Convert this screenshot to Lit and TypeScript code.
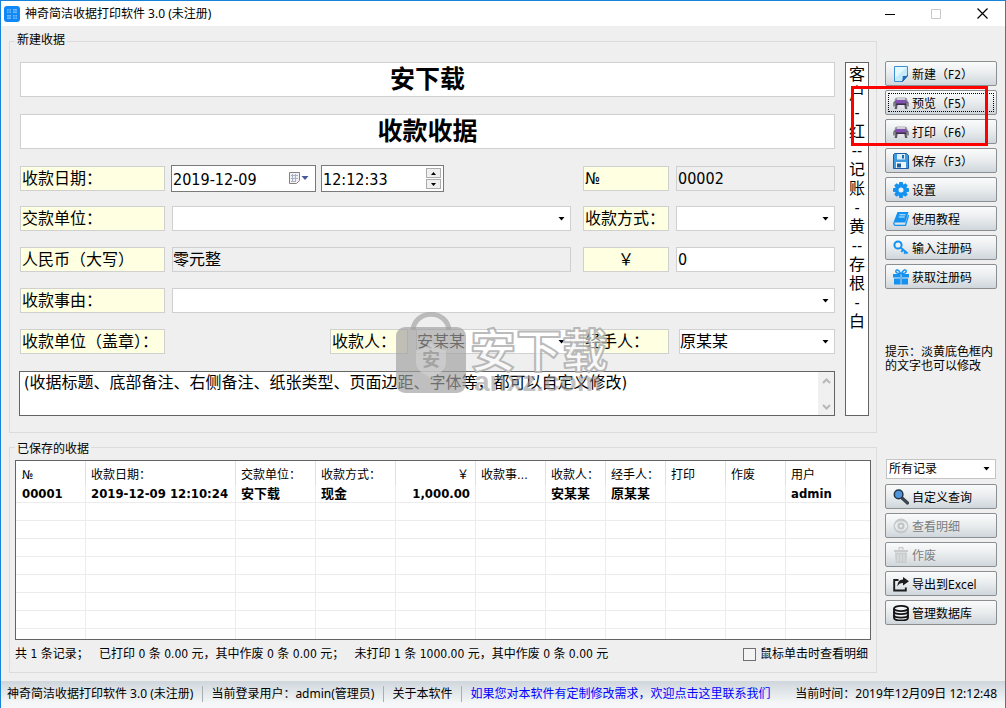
import { LitElement, html, css, svg, nothing } from "lit";
import { customElement, property, state } from "lit/decorators.js";
import { classMap } from "lit/directives/class-map.js";

const glyphs: Record<string, unknown> = {
  page: svg`
    <path d="M1.5 .5H14.5V10L9.5 15.5H1.5Z" fill="#c4ebfc" stroke="#3a8fd0"/>
    <path d="M2 1H14L2 12Z" fill="#e6f8ff"/>
    <path d="M14.5 9.5C13 11 11 10.5 10 10.5C10.5 12 10 14 9.5 15.5Z" fill="#1f78c8" stroke="#1560a8"/>`,
  printer: svg`
    <path d="M4 2H12V5H4Z" fill="#cfcfd6"/>
    <path d="M2 3.500L4 2.500V6H1.500ZM14 3.500L12 2.500V6H14.500Z" fill="#9a98a0"/>
    <path d="M.5 7L3 5.500H13L15.500 7V11H.5Z" fill="#66626c"/>
    <path d="M3 5H13L13.500 8.500H2.500Z" fill="#8250b4"/>
    <path d="M2.500 8.500H13.500V10H2.500Z" fill="#3a2f4c"/>
    <path d="M0 8H2.500V11.500H0ZM13.500 8H16V11.500H13.500Z" fill="#8c8992"/>
    <path d="M4.500 10H11.500L12 12.500H4Z" fill="#e4e4ea"/>
    <path d="M2.500 10.500H4.500L4 14H1.500ZM13.500 10.500H11.500L12 14H14.500Z" fill="#5c5864"/>`,
  disk: svg`
    <path d="M1.500 .5H13.5L15.500 2.500V15.500H.5V1.500Z" fill="#3f9ae0" stroke="#1c5fa8"/>
    <path d="M4 1H12V6.500H4Z" fill="#d8eefb"/>
    <path d="M9 2H11V5.500H9Z" fill="#2468a8"/>
    <path d="M3 9H13V15H3Z" fill="#eef6fc"/>
    <path d="M4 10.500H8V14.500H4Z" fill="#1d5c9c"/>`,
  gear: svg`
    <g fill="#1592f0">
      <circle cx="8" cy="8" r="6"/>
      <path d="M6.300 0H9.700L10.300 3H5.700ZM6.300 16H9.700L10.300 13H5.700ZM0 6.300V9.700L3 10.300V5.700ZM16 6.300V9.700L13 10.300V5.700Z"/>
      <path d="M1.200 3.600L3.600 1.200L6 3L3 6ZM14.800 3.600L12.400 1.200L10 3L13 6ZM1.200 12.400L3.600 14.800L6 13L3 10ZM14.800 12.400L12.400 14.800L10 13L13 10Z"/>
    </g>
    <circle cx="8" cy="8" r="2.500" fill="#eef2f4"/>`,
  book: svg`
    <path d="M4.500 1H15.500L12.300 11.500H2Q.7 11.500 1 10Z" fill="#1592f0"/>
    <path d="M6.500 3.800H12.500M5.800 6H11.800" stroke="#d8efff" stroke-width="1.100"/>
    <path d="M1 11Q.5 14.300 2.500 14.300H12.500L15.600 4" fill="none" stroke="#1592f0" stroke-width="1.300"/>`,
  key: svg`
    <circle cx="5" cy="5" r="3.600" fill="none" stroke="#1592f0" stroke-width="2"/>
    <path d="M7.500 7.500L14.600 13.600M10 9.800L8.300 12M12.600 11.800L11.200 13.800" fill="none" stroke="#1592f0" stroke-width="2"/>`,
  gift: svg`
    <path d="M0 5H7V8.500H0ZM9 5H16V8.500H9ZM1 9.500H7V15.500H1ZM9 9.500H15V15.500H9Z" fill="#1592f0"/>
    <path d="M7.500 4.600C6 .5 3 0 2.800 2.300C2.800 4.200 5 4.600 7.500 4.600ZM8.500 4.600C10 .5 13 0 13.200 2.300C13.200 4.200 11 4.600 8.500 4.600Z" fill="none" stroke="#1592f0" stroke-width="1.500"/>
    <path d="M7.400 5H8.600V15.500H7.400Z" fill="#1592f0"/>`,
  search: svg`
    <path d="M9 9L14.500 14" stroke="#3b444c" stroke-width="3.200" stroke-linecap="round"/>
    <circle cx="5.600" cy="5.400" r="4.300" fill="#4f95dd" stroke="#253545" stroke-width="1.500"/>`,
  eye: svg`
    <circle cx="8" cy="8" r="7.500" fill="#c6c9cb"/>
    <ellipse cx="8" cy="8" rx="6.200" ry="4.800" fill="#e8ebec"/>
    <circle cx="8" cy="8" r="3.500" fill="#bfc3c5"/>
    <circle cx="8" cy="8" r="1.500" fill="#eceeef"/>`,
  trash: svg`
    <path d="M1 3H15V5H1ZM5.500 0H10.500V3H9.300V1.200H6.700V3H5.500ZM2 5.500H14L13.300 16H2.700Z" fill="#c9cccd"/>
    <path d="M5 7V14.500M8 7V14.500M11 7V14.500" stroke="#dfe2e3" stroke-width="1.100"/>`,
  share: svg`
    <path d="M5.500 4H1.200V14.500H12.800V11.500" fill="none" stroke="#1d1d1d" stroke-width="1.900"/>
    <path d="M10 1L16 5.200L10 9.400V7C7 7 5.500 8 4.500 10.500C4.500 6 6.500 3.700 10 3.500Z" fill="#1d1d1d"/>`,
  database: svg`
    <path d="M1 3.500V12.500C1 16.500 15 16.500 15 12.500V3.500" fill="#f2f4f5" stroke="#141414" stroke-width="1.800"/>
    <path d="M1 6.600C1 10 15 10 15 6.600M1 10C1 13.500 15 13.500 15 10" fill="none" stroke="#141414" stroke-width="1.900"/>
    <ellipse cx="8" cy="3.500" rx="7" ry="2.600" fill="#f2f4f5" stroke="#141414" stroke-width="1.800"/>`,
};

const shared = css`
  * { box-sizing: border-box; }
  button, input, select, textarea {
    font: inherit;
    color: inherit;
    margin: 0;
    border-radius: 0;
  }
`;

@customElement("tool-button")
class ToolButton extends LitElement {
  @property() icon = "";
  @property() label = "";
  @property({ type: Boolean }) disabled = false;
  @property({ type: Boolean }) current = false;

  static styles = [shared, css`
    :host { display: block; }
    .btn {
      display: flex;
      align-items: center;
      gap: 3px;
      width: 100%;
      height: 25px;
      padding: 0 7px;
      border: 1px solid #8b8f92;
      border-radius: 2px;
      background: linear-gradient(#fafbfb, #e9ecee 50%, #cfd6db);
      white-space: nowrap;
    }
    .btn:disabled { color: #7d7d7d; }
    .current { outline: 1px dotted #000; outline-offset: -4px; }
    .icon { width: 16px; height: 16px; flex: none; }
    .text { padding-top: 2px; }
  `];

  render() {
    return html`
      <button type="button" class=${classMap({ btn: true, current: this.current })} ?disabled=${this.disabled}>
        <svg class="icon" viewBox="0 0 16 16" aria-hidden="true">${glyphs[this.icon]}</svg>
        <span class="text">${this.label}</span>
      </button>`;
  }
}

type Column = { title: string; width?: number; align?: string };

const columns: Column[] = [
  { title: "№", width: 70 },
  { title: "收款日期：", width: 150 },
  { title: "交款单位：", width: 80 },
  { title: "收款方式：", width: 80 },
  { title: "￥", width: 80, align: "num" },
  { title: "收款事由：", width: 70 },
  { title: "收款人：", width: 60 },
  { title: "经手人：", width: 60 },
  { title: "打印", width: 60 },
  { title: "作废", width: 60 },
  { title: "用户", width: 60 },
  { title: "" },
];

@customElement("receipt-list")
class ReceiptList extends LitElement {
  @property({ attribute: false }) rows: string[][] = [];

  static styles = [shared, css`
    :host {
      display: block;
      height: 180px;
      overflow: hidden;
      border: 1px solid #646464;
      background: #fff;
    }
    table { width: 100%; border-collapse: separate; border-spacing: 0; table-layout: fixed; }
    th, td {
      padding: 0 5px;
      text-align: left;
      white-space: nowrap;
      overflow: hidden;
      line-height: 16px;
      border-right: 1px solid #ececec;
    }
    th { height: 24px; padding: 3px 6px 0 5px; font-weight: 400; text-overflow: ellipsis; border-color: #e0e0e0; }
    td { height: 18px; padding-top: 1px; font-size: 13px; font-weight: 700; border-bottom: 1px solid #ececec; }
    th:first-child, td:first-child { padding-left: 6px; }
    th:last-child, td:last-child { border-right: 0; }
    .num { text-align: right; }
  `];

  render() {
    const body = [...this.rows, ...Array(9 - this.rows.length).fill([])];
    return html`
      <table>
        <colgroup>${columns.map((c) => html`<col width=${c.width ?? nothing}>`)}</colgroup>
        <thead><tr>${columns.map((c) => html`<th class=${c.align ?? ""}>${c.title}</th>`)}</tr></thead>
        <tbody>
          ${body.map((r) => html`<tr>${columns.map((c, i) => html`<td class=${c.align ?? ""}>${r[i] ?? ""}</td>`)}</tr>`)}
        </tbody>
      </table>`;
  }
}

@customElement("app-root")
class AppRoot extends LitElement {
  @state() private receipts = [
    ["00001", "2019-12-09 12:10:24", "安下载", "现金", "1,000.00", "", "安某某", "原某某", "", "", "admin"],
  ];

  static styles = [shared, css`
    :host {
      display: flex;
      flex-direction: column;
      position: relative;
      box-sizing: border-box;
      min-height: 100vh;
      border: 1px solid #1883d7;
      background: #efefef;
      color: #000;
      font: 12px/16px "DejaVu Sans Condensed", "Noto Sans CJK SC", sans-serif;
    }

    .titlebar {
      display: flex;
      align-items: center;
      height: 25px;
      padding-left: 3px;
      background: #fff;
      font-family: "Noto Sans", "Noto Sans CJK SC", sans-serif;
    }
    .logo { width: 16px; height: 16px; margin-right: 5px; }
    .caption { flex: 1; }
    .winbtn { width: 46px; height: 25px; padding: 0; border: 0; background: none; }
    .winbtn svg { display: block; margin: auto; }

    .main { flex: 1; display: flex; gap: 8px; padding: 7px 8px 8px; }
    .left { flex: 1; min-width: 0; display: flex; flex-direction: column; gap: 6px; }

    fieldset { min-width: 0; margin: 0; border: 1px solid #dcdcdc; }
    legend { margin: 0; padding: 0 2px 3px; line-height: 14px; }
    .entry { padding: 12px 7px 16px 10px; }
    .entry legend { margin-left: -5px; }
    .saved { padding: 4px 5px 10px; }
    .saved legend { padding: 3px 2px 0; }

    .entry-body { display: flex; gap: 10px; }
    .form { flex: 1; min-width: 0; font-size: 16px; line-height: 22px; }
    .heading {
      display: block;
      width: 100%;
      height: 35px;
      margin-bottom: 17px;
      padding: 0 0 5px;
      border: 1px solid #d0d0d0;
      text-align: center;
      font-family: "Liberation Serif", "Noto Sans CJK SC", serif;
      font-size: 25px;
      font-weight: 700;
    }
    .heading.title { margin-bottom: 16px; }
    .row {
      display: grid;
      grid-template-columns: 145px 1fr 91px 159px;
      column-gap: 7px;
      align-items: center;
      margin-bottom: 16px;
    }
    .row.date { margin-bottom: 14px; }
    .second { margin-left: 5px; }
    .wide { grid-column: 2 / -1; }
    .tag, .field { display: block; height: 25px; border: 1px solid #d0d0d0; padding: 0 1px; white-space: nowrap; }
    .tag { padding-top: 1px; background: #ffffe1; }
    .tag.center { text-align: center; }
    .field { width: 100%; min-width: 0; background: #fff; }
    input.field { padding: 0 0 0 1px; }
    #words { padding: 0 0 3px; }
    .field[readonly] { background: #efefef; }
    .pick { display: grid; align-items: center; min-width: 0; }
    .pick > * { grid-area: 1 / 1; }
    .pick select { appearance: none; padding: 0 16px 0 0; outline: none; }
    .arrow { justify-self: end; margin-right: 6px; pointer-events: none; }
    .payee { display: flex; gap: 8px; margin-left: 158px; }
    .payee .tag { width: 78px; flex: none; }
    .payee .pick { flex: 1; }
    .payer { margin-left: 3px; }

    .times { display: flex; gap: 5px; margin-left: -1px; }
    .stamp { display: flex; align-items: center; height: 27px; border: 1px solid #7a7a7a; background: #fff; }
    .stamp.day { width: 145px; }
    .stamp.clock { width: 123px; }
    .stamp input { flex: 1; width: 0; height: 24px; padding: 1px 1px 0; border: 0; background: none; }
    .calendar { display: flex; padding: 0 6px 2px 5px; border: 0; background: none; }
    .spins { display: flex; flex-direction: column; gap: 1px; margin-right: 2px; }
    .spins button { display: grid; place-items: center; width: 15px; height: 10px; padding: 0; border: 1px solid #acacac; background: #f0f0f0; }

    .memo { display: flex; height: 45px; margin: 17px 0 0 -1px; border: 1px solid #646464; background: #fff; }
    .memo textarea { flex: 1; height: 43px; padding: 0 4px; border: 0; resize: none; overflow: hidden; background: none; line-height: 21px; }
    .scroll { display: flex; flex-direction: column; justify-content: space-between; align-items: center; width: 16px; padding: 6px 0 5px; background: #f0f0f0; }
    .side {
      flex: none;
      width: 24px;
      padding: 2px 0;
      border: 1px solid #646464;
      background: #fff;
      resize: none;
      overflow: hidden;
      text-align: center;
      font-size: 16px;
      line-height: 19px;
    }

    .totals { display: flex; align-items: center; justify-content: space-between; padding: 6px 3px 0 0; }
    .totals p { margin: 0; white-space: pre; }
    .check { display: flex; align-items: center; gap: 4px; }
    .check input { appearance: none; width: 13px; height: 13px; border: 1px solid #707070; background: #f4f4f4; }

    .tools { flex: none; width: 112px; display: flex; flex-direction: column; gap: 4px; padding-top: 28px; }
    .hint { margin: 52px -4px 82px 0; line-height: 14px; }
    .filter { margin: 0 1px 1px; }
    .filter select { height: 20px; padding-left: 2px; border-color: #c4c4c4; }

    .status {
      display: flex;
      align-items: center;
      height: 27px;
      padding: 0 8px 2px 6px;
      background: linear-gradient(#cfd6dc, #f4f6f7 80%);
      font-family: "Noto Sans", "Noto Sans CJK SC", sans-serif;
      white-space: nowrap;
    }
    .status span { padding-right: 9px; margin-right: 8px; border-right: 1px solid #a8aeb3; }
    .status a { color: #0000ff; text-decoration: none; }
    .status time { margin-left: auto; }

    .marker { position: absolute; z-index: 3; top: 85px; right: 17px; width: 137px; height: 60px; border: 3px solid #ff0000; pointer-events: none; }
    .watermark { position: absolute; z-index: 2; left: 394px; top: 311px; pointer-events: none; }
    .wm-cn { font: 700 46px "Noto Sans CJK SC", sans-serif; fill: #fff; fill-opacity: .6; stroke: #a8a8a8; stroke-opacity: .8; stroke-width: 2; stroke-linejoin: round; }
    .wm-en { font: 700 28px "Liberation Sans", sans-serif; fill: #999; fill-opacity: .6; }
    .wm-seal { font: 700 18px "Noto Sans CJK SC", sans-serif; fill: #a3a3a3; }
  `];

  private arrow() {
    return html`<svg class="arrow" width="7" height="4" viewBox="0 0 7 4" aria-hidden="true"><path d="M.5 0H6.500L3.500 3.500Z"/></svg>`;
  }

  private pick(id: string, value: string, name = "") {
    return html`
      <div class="pick">
        <select class="field" id=${id} aria-label=${name || nothing}><option>${value}</option></select>
        ${this.arrow()}
      </div>`;
  }

  render() {
    return html`
      <header class="titlebar">
        <svg class="logo" viewBox="0 0 16 16" aria-hidden="true">
          <rect width="16" height="16" rx="3" fill="#1088f8"/>
          <path d="M3 3H7V7H3ZM9 3H13V7H9ZM3 9H7V13H3ZM9 9H13V13H9Z" fill="#8cc8ff" opacity=".75"/>
          <path d="M3 5H7M9 5H13M3 11H7M9 11H13M5 3V7M11 9V13" stroke="#1088f8" stroke-width=".8"/>
        </svg>
        <span class="caption">神奇简洁收据打印软件 3.0 (未注册)</span>
        <button class="winbtn" aria-label="最小化"><svg width="10" height="10"><path d="M0 5.500H10" stroke="#000"/></svg></button>
        <button class="winbtn" aria-label="最大化" disabled><svg width="10" height="10"><path d="M.5 .5H9.500V9.500H.5Z" fill="none" stroke="#c8c8c8"/></svg></button>
        <button class="winbtn" aria-label="关闭"><svg width="11" height="11"><path d="M.5 .5L10.500 10.500M10.500 .5L.5 10.500" stroke="#000" stroke-width="1.200"/></svg></button>
      </header>

      <main class="main">
        <div class="left">
          <fieldset class="entry">
            <legend>新建收据</legend>
            <div class="entry-body">
              <div class="form">
                <input class="heading" aria-label="单位名称" value="安下载">
                <input class="heading title" aria-label="收据标题" value="收款收据">

                <div class="row date">
                  <label class="tag" for="day">收款日期：</label>
                  <div class="times">
                    <div class="stamp day">
                      <input id="day" value="2019-12-09">
                      <button class="calendar" aria-label="选择日期">
                        <svg width="21" height="14" viewBox="0 0 21 14">
                          <path d="M1.500 1.500H11.500V9.500L8.500 12.500H1.500Z" fill="#f2f2f4" stroke="#8a8080"/>
                          <path d="M3 4.500H10M3 7.500H10M3 10.500H8M4.500 3V11M7.500 3V11" stroke="#a8b0c8"/>
                          <path d="M13.500 5H20.500L17 9Z" fill="#46599a"/>
                        </svg>
                      </button>
                    </div>
                    <div class="stamp clock">
                      <input aria-label="收款时间" value="12:12:33">
                      <div class="spins">
                        <button aria-label="增加"><svg width="5" height="3"><path d="M0 3H5L2.500 0Z"/></svg></button>
                        <button aria-label="减少"><svg width="5" height="3"><path d="M0 0H5L2.500 3Z"/></svg></button>
                      </div>
                    </div>
                  </div>
                  <label class="tag second" for="number">№</label>
                  <input class="field" id="number" value="00002" readonly>
                </div>

                <div class="row">
                  <label class="tag" for="unit">交款单位：</label>
                  ${this.pick("unit", "")}
                  <label class="tag second" for="method">收款方式：</label>
                  ${this.pick("method", "")}
                </div>

                <div class="row">
                  <label class="tag" for="words">人民币（大写）</label>
                  <input class="field" id="words" value="零元整" readonly>
                  <label class="tag second center" for="amount">￥</label>
                  <input class="field" id="amount" value="0">
                </div>

                <div class="row">
                  <label class="tag" for="reason">收款事由：</label>
                  <div class="wide">${this.pick("reason", "")}</div>
                </div>

                <div class="row">
                  <span class="tag">收款单位（盖章）：</span>
                  <div class="payee">
                    <label class="tag" for="payee">收款人：</label>
                    ${this.pick("payee", "安某某")}
                  </div>
                  <label class="tag second" for="handler">经手人：</label>
                  <div class="payer">${this.pick("handler", "原某某")}</div>
                </div>

                <div class="memo">
                  <textarea aria-label="底部备注" .value=${"(收据标题、底部备注、右侧备注、纸张类型、页面边距、字体等，都可以自定义修改)"}></textarea>
                  <div class="scroll" aria-hidden="true">
                    <svg width="9" height="6"><path d="M1 5L4.500 1.500L8 5" fill="none" stroke="#b8b8b8" stroke-width="2"/></svg>
                    <svg width="9" height="6"><path d="M1 1L4.500 4.500L8 1" fill="none" stroke="#b8b8b8" stroke-width="2"/></svg>
                  </div>
                </div>
              </div>
              <textarea class="side" aria-label="右侧备注" .value=${"客\n户\n-\n红\n--\n记\n账\n-\n黄\n--\n存\n根\n-\n白"}></textarea>
            </div>
          </fieldset>

          <fieldset class="saved">
            <legend>已保存的收据</legend>
            <receipt-list .rows=${this.receipts}></receipt-list>
            <div class="totals">
              <p>共 1 条记录；   已打印 0 条 0.00 元，其中作废 0 条 0.00 元；   未打印 1 条 1000.00 元，其中作废 0 条 0.00 元</p>
              <label class="check"><input type="checkbox">鼠标单击时查看明细</label>
            </div>
          </fieldset>
        </div>

        <aside class="tools">
          <tool-button icon="page" label="新建（F2）"></tool-button>
          <tool-button icon="printer" label="预览（F5）" current></tool-button>
          <tool-button icon="printer" label="打印（F6）"></tool-button>
          <tool-button icon="disk" label="保存（F3）"></tool-button>
          <tool-button icon="gear" label="设置"></tool-button>
          <tool-button icon="book" label="使用教程"></tool-button>
          <tool-button icon="key" label="输入注册码"></tool-button>
          <tool-button icon="gift" label="获取注册码"></tool-button>
          <p class="hint">提示：淡黄底色框内的文字也可以修改</p>
          <div class="filter">${this.pick("filter", "所有记录", "记录筛选")}</div>
          <tool-button icon="search" label="自定义查询"></tool-button>
          <tool-button icon="eye" label="查看明细" disabled></tool-button>
          <tool-button icon="trash" label="作废" disabled></tool-button>
          <tool-button icon="share" label="导出到Excel"></tool-button>
          <tool-button icon="database" label="管理数据库"></tool-button>
        </aside>
      </main>

      <footer class="status">
        <span>神奇简洁收据打印软件 3.0 (未注册)</span>
        <span>当前登录用户：admin(管理员)</span>
        <span>关于本软件</span>
        <a href="#contact">如果您对本软件有定制修改需求，欢迎点击这里联系我们</a>
        <time>当前时间：2019年12月09日 12:12:48</time>
      </footer>

      <div class="marker"></div>
      <svg class="watermark" width="216" height="84" viewBox="0 0 216 84" aria-hidden="true">
        <path d="M18 18C20 -3 52 -3 54 18" fill="none" stroke="#aaa" stroke-opacity=".75" stroke-width="5"/>
        <rect x="1" y="15" width="70" height="66" rx="9" fill="#a0a0a0" fill-opacity=".68"/>
        <path d="M36 31C42 37 48 38 51 38V50C51 59 43 62 36 66C29 62 21 59 21 50V38C24 38 30 37 36 31Z" fill="#d6d6d6" fill-opacity=".6"/>
        <text class="wm-seal" x="27" y="54">安</text>
        <text class="wm-cn" x="75" y="55">安下载</text>
        <text class="wm-en" x="79" y="79">anxz.com</text>
      </svg>
    `;
  }
}
